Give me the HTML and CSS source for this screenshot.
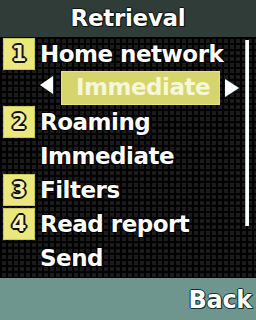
FILE: index.html
```html
<!DOCTYPE html>
<html>
<head>
<meta charset="utf-8">
<link rel="stylesheet" href="styles.css">
</head>
<body>
<div class="screen">
  <header class="title-bar"><span class="title">Retrieval</span></header>
  <main class="content">
    <div class="list">
      <div class="row"><span class="badge">1</span><span class="label">Home network</span></div>
      <div class="row sel-row">
        <span class="arrow arrow-left"></span>
        <span class="selection">Immediate</span>
        <span class="arrow arrow-right"></span>
      </div>
      <div class="row"><span class="badge">2</span><span class="label">Roaming</span></div>
      <div class="row"><span class="value">Immediate</span></div>
      <div class="row"><span class="badge">3</span><span class="label">Filters</span></div>
      <div class="row"><span class="badge">4</span><span class="label">Read report</span></div>
      <div class="row"><span class="value">Send</span></div>
    </div>
    <div class="scrollbar"><div class="thumb"></div></div>
  </main>
  <footer class="soft-bar"><span class="softkey">Back</span></footer>
</div>
</body>
</html>
```
FILE: styles.css
```css
html, body {
  margin: 0;
  padding: 0;
  width: 256px;
  height: 320px;
  overflow: hidden;
  background: #000;
}
.screen {
  width: 256px;
  height: 320px;
  display: flex;
  flex-direction: column;
  font-family: "DejaVu Sans", sans-serif;
  font-weight: bold;
  color: #fff;
}
.title-bar {
  height: 37px;
  flex: none;
  background: #2f3c37;
  display: flex;
  align-items: center;
  justify-content: center;
}
.title {
  font-size: 23px;
  letter-spacing: -0.3px;
  text-shadow: -1px 0 #0a1210, 1px 0 #0a1210, 0 -1px #0a1210, 0 1px #0a1210, 1px 1px #0a1210;
  margin-top: -2px;
}
.content {
  flex: 1;
  display: flex;
  background-color: #000;
  background-image:
    linear-gradient(#000 0 2px, transparent 2px),
    linear-gradient(90deg, #000 0 2px, #1b1b1b 2px);
  background-size: 6px 6px;
}
.list {
  flex: 1;
  display: flex;
  flex-direction: column;
}
.row {
  height: 34px;
  display: flex;
  align-items: center;
  font-size: 23px;
  letter-spacing: -0.5px;
  line-height: 34px;
  text-shadow: -1px 0 #000, 1px 0 #000, 0 -1px #000, 0 1px #000;
}
.badge {
  width: 32px;
  height: 32px;
  margin-left: 3px;
  margin-right: 5px;
  background: #eae77c;
  box-shadow: inset 0 0 0 1px #c9c560;
  color: #f4f2b0;
  font-size: 21px;
  letter-spacing: 0;
  line-height: 32px;
  text-align: center;
  text-shadow: -2px 0 #111, 2px 0 #111, 0 -2px #111, 0 2px #111, -1px -1px #111, 1px 1px #111, -1px 1px #111, 1px -1px #111;
}
.label, .value {
  white-space: nowrap;
}
.value {
  margin-left: 40px;
}
.sel-row {
  padding-left: 40px;
}
.arrow {
  width: 0;
  height: 0;
  border-top: 9px solid transparent;
  border-bottom: 9px solid transparent;
  filter: drop-shadow(1px 0 0 #1a3a40);
}
.arrow-left {
  border-right: 13px solid #fff;
  margin-top: -6px;
  margin-right: 8px;
}
.arrow-right {
  border-left: 14px solid #fff;
  margin-left: 5px;
}
.selection {
  width: 144px;
  height: 34px;
  padding-left: 15px;
  background: #d6d46c;
  box-shadow: inset 0 0 0 1px #e4e284;
  color: #f6f6d8;
  text-shadow: none;
  line-height: 32px;
  white-space: nowrap;
}
.scrollbar {
  width: 3px;
  margin-right: 7px;
  padding-top: 3px;
}
.thumb {
  height: 186px;
  background: #fff;
  box-shadow: -1px 0 0 #7fd6f0;
}
.soft-bar {
  height: 42px;
  flex: none;
  background: #6e968f;
  display: flex;
  align-items: center;
  justify-content: flex-end;
}
.softkey {
  font-size: 24px;
  letter-spacing: -0.3px;
  margin-right: 4px;
  margin-top: 1px;
  text-shadow: -1px 0 #10302a, 1px 0 #10302a, 0 -1px #10302a, 0 1px #10302a, 1px 1px #10302a;
}
```
